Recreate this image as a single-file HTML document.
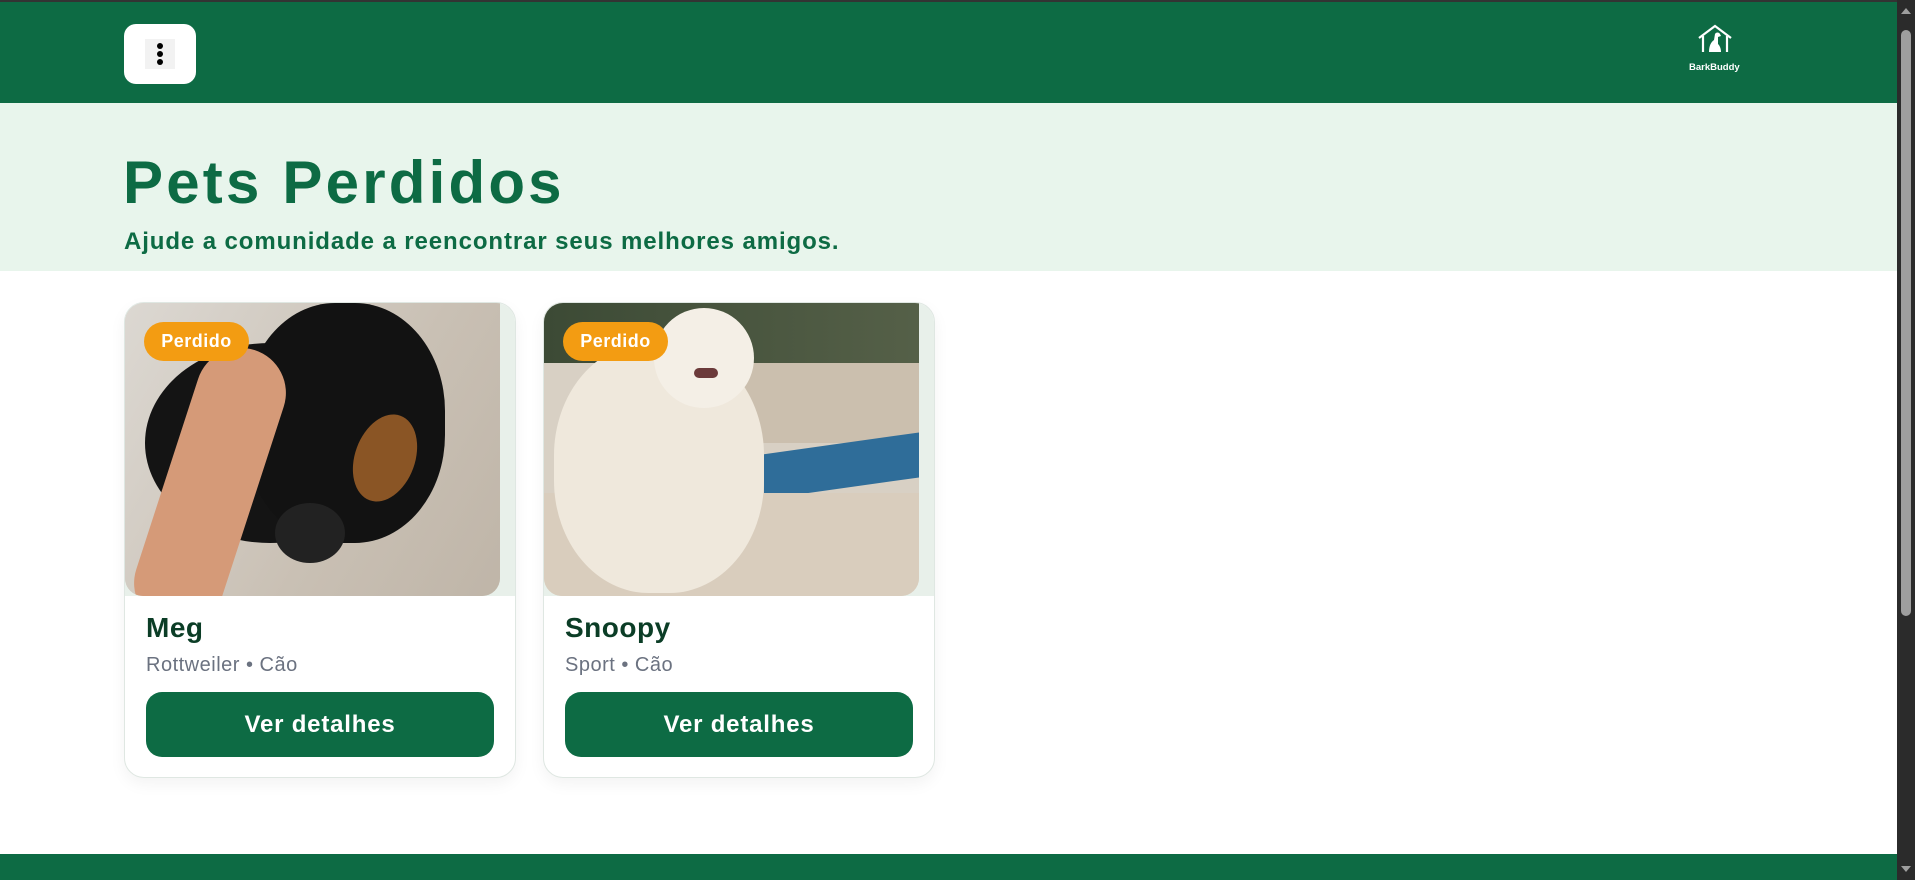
<!DOCTYPE html>
<html><head><meta charset="utf-8"><style>
*{margin:0;padding:0;box-sizing:border-box}
body{width:1915px;height:880px;overflow:hidden;background:#fff;font-family:"Liberation Sans",sans-serif;position:relative}
.top{position:absolute;left:0;top:0;width:1897px;height:2px;background:#333}
.hdr{position:absolute;left:0;top:2px;width:1897px;height:101px;background:#0d6b44}
.menu{position:absolute;left:124px;top:22px;width:72px;height:60px;background:#fff;border-radius:12px}
.menu .in{position:absolute;left:21px;top:15px;width:30px;height:30px;background:#f2f2f2}
.menu i{position:absolute;left:12px;width:6px;height:6px;border-radius:50%;background:#000}
.band{position:absolute;left:0;top:103px;width:1897px;height:168px;background:#e8f5ec}
h1{position:absolute;left:123px;top:148px;font-size:60px;font-weight:bold;color:#0d6b44;letter-spacing:3.2px}
.sub{position:absolute;left:124px;top:228px;font-size:24px;font-weight:bold;color:#0d6b44;letter-spacing:0.9px}
.card{position:absolute;top:302px;width:392px;height:476px;border:1px solid #dfe7e2;border-radius:20px;background:#fff;box-shadow:0 6px 16px rgba(0,0,0,.05);overflow:hidden}
.img{position:absolute;left:0;top:0;width:392px;height:293px;background:#e8f0ea}
.ph{position:absolute;left:0;top:0;width:375px;height:293px;border-radius:0 0 18px 18px;overflow:hidden}
.badge{position:absolute;left:19px;top:19px;width:105px;height:39px;border-radius:20px;background:#f39c12;color:#fff;font-weight:bold;font-size:18px;text-align:center;line-height:39px;letter-spacing:0.5px}
.name{position:absolute;left:21px;top:309px;font-size:28px;font-weight:bold;color:#0b3d26;letter-spacing:0.5px}
.breed{position:absolute;left:21px;top:351px;font-size:20px;color:#6b7280;letter-spacing:0.5px}
.btn{position:absolute;left:21px;top:389px;width:348px;height:65px;border-radius:16px;background:#0d6b44;color:#fff;font-weight:bold;font-size:24px;text-align:center;line-height:65px;letter-spacing:0.8px}
.foot{position:absolute;left:0;top:854px;width:1897px;height:26px;background:#0d6b44}
.sb{position:absolute;left:1897px;top:0;width:18px;height:880px;background:#2b2b2b}
.thumb{position:absolute;left:4px;top:30px;width:10px;height:586px;background:#9e9e9e;border-radius:5px}
</style></head><body>
<div class="top"></div>
<div class="hdr">
 <div class="menu"><div class="in"><i style="top:4px"></i><i style="top:12px"></i><i style="top:20px"></i></div></div>
 <svg style="position:absolute;left:1697px;top:22px" width="36" height="30" viewBox="0 0 36 30" fill="none" stroke="#fff" stroke-width="2.2"><path d="M2 14 L18 2 L34 14 M6 12 V28 M30 12 V28"/><path d="M12 28 C12 22 14 18 17 16 L18 10 C19 8 22 8 23 10 L24 12 L21 13 L21 20 C23 22 24 25 24 28 Z" fill="#fff" stroke="none"/></svg>
 <div style="position:absolute;left:1689px;top:60px;color:#fff;font-size:9.5px;font-weight:bold">BarkBuddy</div>
</div>
<div class="band"></div>
<h1>Pets Perdidos</h1>
<div class="sub">Ajude a comunidade a reencontrar seus melhores amigos.</div>

<div class="card" style="left:124px">
 <div class="img"><div class="ph" style="background:#cfc7bd">
  <div style="position:absolute;left:0;top:0;width:375px;height:293px;background:linear-gradient(120deg,#dcd8d2 0%,#c9c0b4 60%,#bfb5a8 100%)"></div>
  <div style="position:absolute;left:20px;top:40px;width:250px;height:200px;border-radius:50%;background:#141414"></div>
  <div style="position:absolute;left:120px;top:0;width:200px;height:240px;border-radius:45%;background:#121212"></div>
  <div style="position:absolute;left:230px;top:110px;width:60px;height:90px;border-radius:50%;background:#8a5525;transform:rotate(20deg)"></div>
  <div style="position:absolute;left:150px;top:200px;width:70px;height:60px;border-radius:50%;background:#222"></div>
  <div style="position:absolute;left:40px;top:40px;width:90px;height:290px;border-radius:45px;background:#d59a78;transform:rotate(18deg)"></div>
 </div>
 <div class="badge">Perdido</div></div>
 <div class="name">Meg</div>
 <div class="breed">Rottweiler • Cão</div>
 <div class="btn">Ver detalhes</div>
</div>

<div class="card" style="left:543px">
 <div class="img"><div class="ph" style="background:#d8d0c4">
  <div style="position:absolute;left:0;top:0;width:375px;height:60px;background:linear-gradient(90deg,#3c4a35,#556048)"></div>
  <div style="position:absolute;left:200px;top:60px;width:175px;height:80px;background:#cbbfae"></div>
  <div style="position:absolute;left:220px;top:140px;width:160px;height:45px;background:#2f6d99;transform:skewY(-8deg)"></div>
  <div style="position:absolute;left:0;top:190px;width:375px;height:103px;background:#d9cdbd"></div>
  <div style="position:absolute;left:10px;top:40px;width:210px;height:250px;border-radius:45%;background:#efe8dc"></div>
  <div style="position:absolute;left:110px;top:5px;width:100px;height:100px;border-radius:50%;background:#f4efe6"></div>
  <div style="position:absolute;left:150px;top:65px;width:24px;height:10px;border-radius:5px;background:#6b3a3a"></div>
 </div>
 <div class="badge">Perdido</div></div>
 <div class="name">Snoopy</div>
 <div class="breed">Sport • Cão</div>
 <div class="btn">Ver detalhes</div>
</div>

<div class="foot"></div>
<div class="sb"><div style="position:absolute;left:4px;top:8px;border:5px solid transparent;border-bottom:6px solid #9e9e9e;border-top:0"></div><div class="thumb"></div><div style="position:absolute;left:4px;bottom:8px;border:5px solid transparent;border-top:6px solid #9e9e9e;border-bottom:0"></div></div>
</body></html>
